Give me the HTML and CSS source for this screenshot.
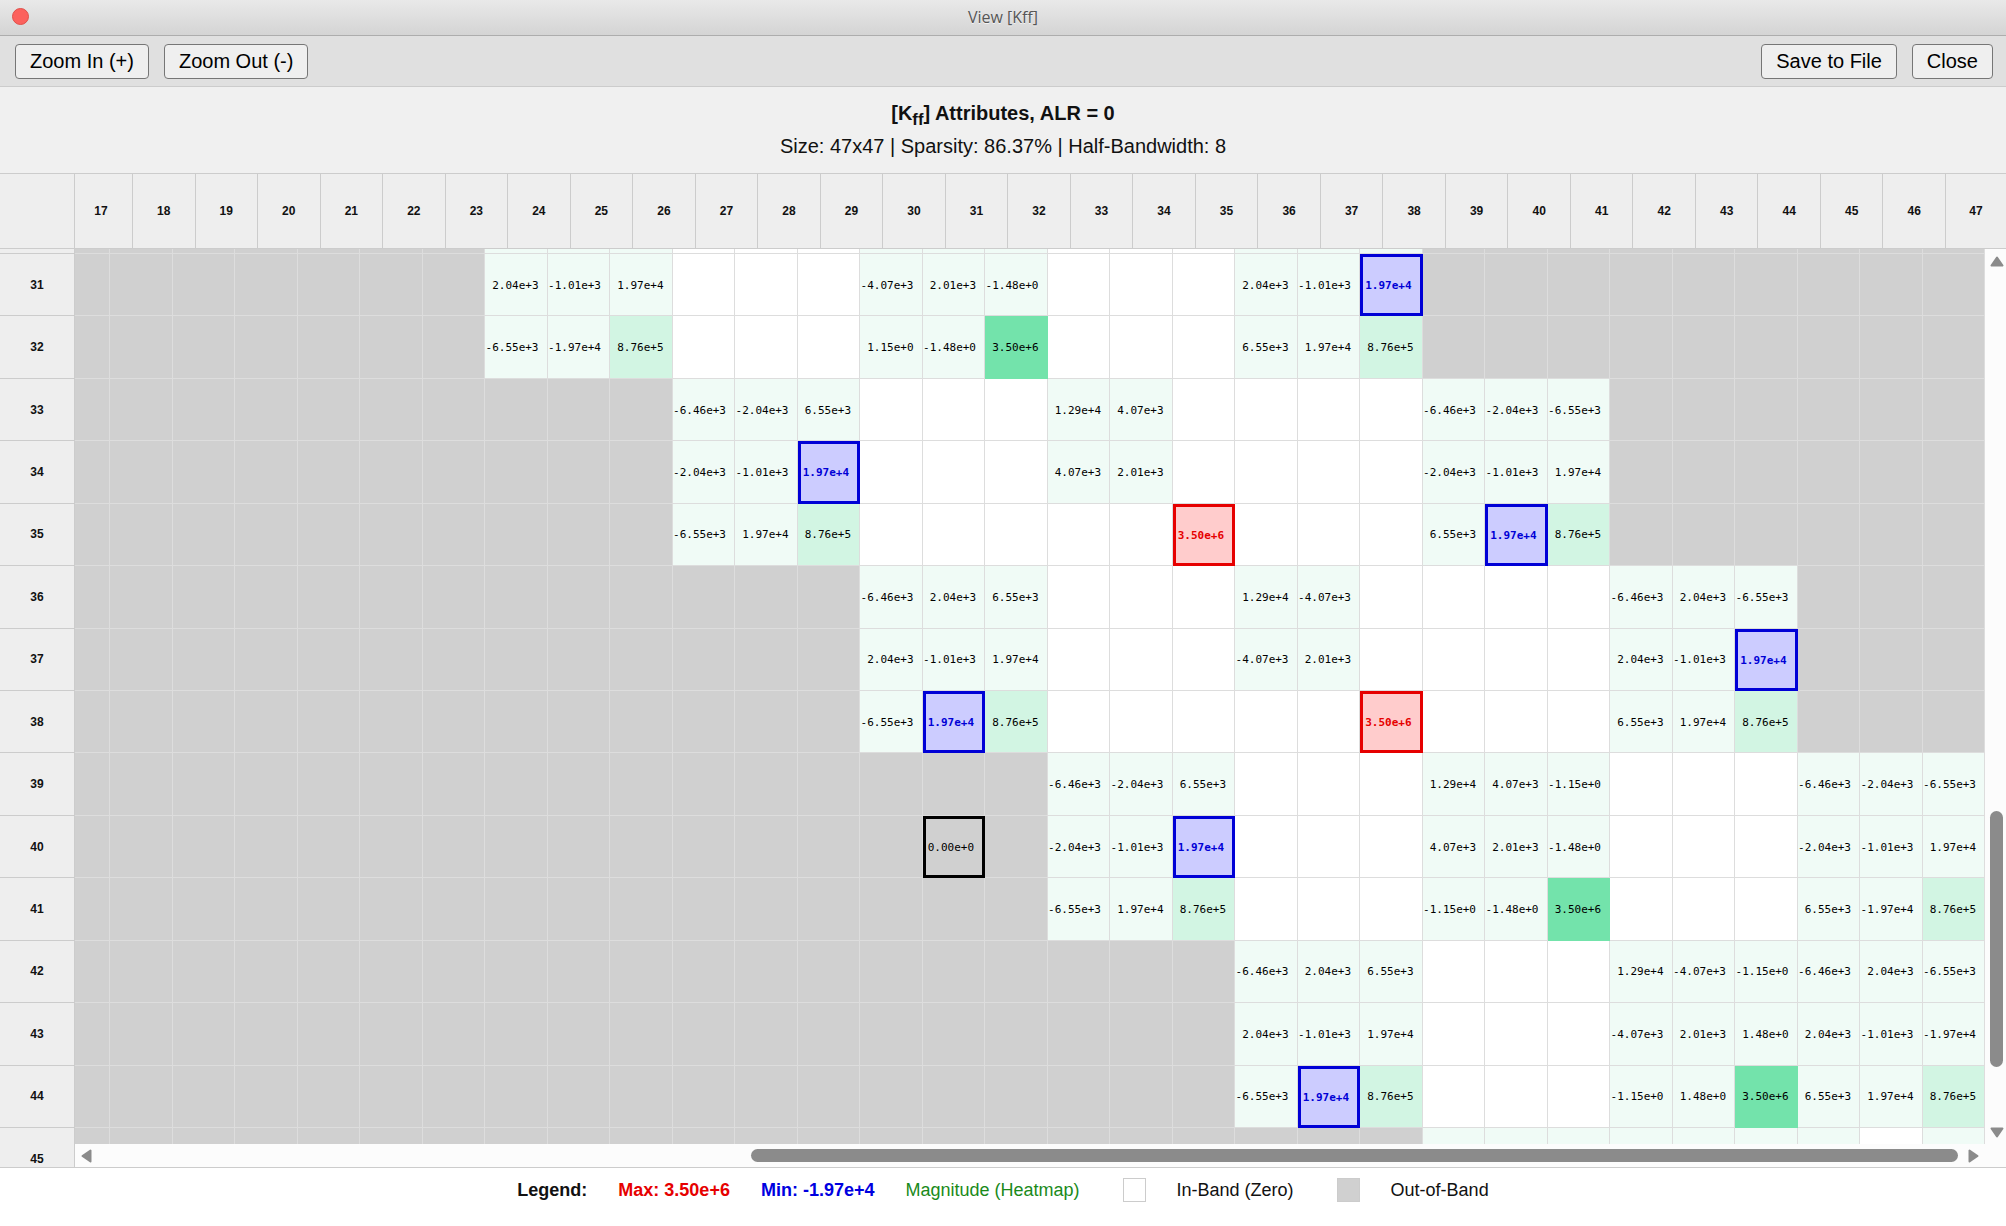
FILE: index.html
```html
<!DOCTYPE html>
<html lang="en">
<head>
<meta charset="utf-8">
<title>View [Kff]</title>
<link rel="stylesheet" href="styles.css">
</head>
<body>
    <div class="titlebar">
        <button class="close-dot" aria-label="Close window"></button>
        <span>View [Kff]</span>
    </div>
    <div class="toolbar">
        <button class="btn">Zoom In (+)</button>
        <button class="btn">Zoom Out (-)</button>
        <span class="spacer"></span>
        <button class="btn">Save to File</button>
        <button class="btn">Close</button>
    </div>
    <div class="info">
        <strong>[K<sub>ff</sub>] Attributes, ALR = 0</strong>
        <div>Size: 47x47 | Sparsity: 86.37% | Half-Bandwidth: 8</div>
    </div>
    <div class="viewer">
        <table class="matrix">
            <thead><tr id="col-heads"><th></th></tr></thead>
            <tbody id="rows"></tbody>
        </table>
        <div class="scrollbar vertical">
            <svg width="14" height="11" viewBox="0 0 14 11"><path d="M7 1.5 L12.5 9.5 H1.5 Z"/></svg>
            <div class="track"><div class="thumb"></div></div>
            <svg width="14" height="11" viewBox="0 0 14 11"><path d="M7 9.5 L12.5 1.5 H1.5 Z"/></svg>
        </div>
        <div class="scrollbar horizontal">
            <svg width="11" height="14" viewBox="0 0 11 14"><path d="M1.5 7 L9.5 1.5 V12.5 Z"/></svg>
            <div class="track"><div class="thumb"></div></div>
            <svg width="11" height="14" viewBox="0 0 11 14"><path d="M9.5 7 L1.5 1.5 V12.5 Z"/></svg>
        </div>
    </div>
    <div class="legend">
        <strong>Legend:</strong>
        <strong class="max-text">Max: 3.50e+6</strong>
        <strong class="min-text">Min: -1.97e+4</strong>
        <span class="heat-text">Magnitude (Heatmap)</span>
        <span class="swatch in-band"></span>
        <span>In-Band (Zero)</span>
        <span class="swatch out-band"></span>
        <span>Out-of-Band</span>
    </div>
    <script>
        const FIRST_COL = 17;
        const LAST_COL = 47;

        // row number, first column in band, values ('.' = zero inside the band)
        // 'h' = heat only, 'max' / 'min' = highlighted
        const rows = [
        [30, 24, 'h h h . . . h h h . . . h h h'],
        [31, 24, '2.04e+3 -1.01e+3 1.97e+4 . . . -4.07e+3 2.01e+3 -1.48e+0 . . . 2.04e+3 -1.01e+3 min'],
        [32, 24, '-6.55e+3 -1.97e+4 8.76e+5 . . . 1.15e+0 -1.48e+0 3.50e+6 . . . 6.55e+3 1.97e+4 8.76e+5'],
        [33, 27, '-6.46e+3 -2.04e+3 6.55e+3 . . . 1.29e+4 4.07e+3 . . . . -6.46e+3 -2.04e+3 -6.55e+3'],
        [34, 27, '-2.04e+3 -1.01e+3 min . . . 4.07e+3 2.01e+3 . . . . -2.04e+3 -1.01e+3 1.97e+4'],
        [35, 27, '-6.55e+3 1.97e+4 8.76e+5 . . . . . max . . . 6.55e+3 min 8.76e+5'],
        [36, 30, '-6.46e+3 2.04e+3 6.55e+3 . . . 1.29e+4 -4.07e+3 . . . . -6.46e+3 2.04e+3 -6.55e+3'],
        [37, 30, '2.04e+3 -1.01e+3 1.97e+4 . . . -4.07e+3 2.01e+3 . . . . 2.04e+3 -1.01e+3 min'],
        [38, 30, '-6.55e+3 min 8.76e+5 . . . . . max . . . 6.55e+3 1.97e+4 8.76e+5'],
        [39, 33, '-6.46e+3 -2.04e+3 6.55e+3 . . . 1.29e+4 4.07e+3 -1.15e+0 . . . -6.46e+3 -2.04e+3 -6.55e+3'],
        [40, 33, '-2.04e+3 -1.01e+3 min . . . 4.07e+3 2.01e+3 -1.48e+0 . . . -2.04e+3 -1.01e+3 1.97e+4'],
        [41, 33, '-6.55e+3 1.97e+4 8.76e+5 . . . -1.15e+0 -1.48e+0 3.50e+6 . . . 6.55e+3 -1.97e+4 8.76e+5'],
        [42, 36, '-6.46e+3 2.04e+3 6.55e+3 . . . 1.29e+4 -4.07e+3 -1.15e+0 -6.46e+3 2.04e+3 -6.55e+3'],
        [43, 36, '2.04e+3 -1.01e+3 1.97e+4 . . . -4.07e+3 2.01e+3 1.48e+0 2.04e+3 -1.01e+3 -1.97e+4'],
        [44, 36, '-6.55e+3 min 8.76e+5 . . . -1.15e+0 1.48e+0 3.50e+6 6.55e+3 1.97e+4 8.76e+5'],
        [45, 39, 'h h h h h h h . h'],
        ];
        const selected = { row: 40, col: 31 };

        const colHeads = document.getElementById('col-heads');
        for (let c = FIRST_COL; c <= LAST_COL; c++) {
            const th = document.createElement('th');
            th.textContent = c;
            colHeads.appendChild(th);
        }

        function fillCell(td, value) {
            if (value === undefined) {
                td.className = 'out';
            } else if (value === 'max' || value === 'min') {
                td.className = value;
                td.textContent = value === 'max' ? '3.50e+6' : '1.97e+4';
            } else if (value !== '.') {
                td.className = 'heat';
                if (value === '8.76e+5') td.className = 'heat mid';
                if (value === '3.50e+6') td.className = 'heat high';
                if (value !== 'h') td.textContent = value;
            }
        }

        const body = document.getElementById('rows');
        for (const [row, start, text] of rows) {
            const values = text.split(' ');
            const tr = document.createElement('tr');
            const th = document.createElement('th');
            if (row > 30) th.textContent = row;
            tr.appendChild(th);
            for (let c = FIRST_COL; c <= LAST_COL; c++) {
                const td = document.createElement('td');
                fillCell(td, values[c - start]);
                if (row === selected.row && c === selected.col) {
                    td.classList.add('selected');
                    td.textContent = '0.00e+0';
                }
                tr.appendChild(td);
            }
            body.appendChild(tr);
        }
    </script>
</body>
</html>
```

FILE: styles.css
```css
* {
    box-sizing: border-box;
}
body {
    margin: 0;
    height: 100vh;
    display: flex;
    flex-direction: column;
    overflow: hidden;
    background: #fff;
    color: #111;
    font-family: Arial, "Liberation Sans", sans-serif;
    font-size: 18px;
}
.titlebar {
    position: relative;
    height: 36px;
    display: flex;
    align-items: center;
    justify-content: center;
    padding-bottom: 1px;
    border-bottom: 1px solid #adadad;
    background: linear-gradient(#e9e9e9, #d4d4d4);
    color: #555;
    font-family: "Open Sans", "Noto Sans", sans-serif;
    font-size: 16px;
    text-shadow: 0 1px 0 #f4f4f4;
}
.close-dot {
    position: absolute;
    left: 12px;
    top: 8px;
    width: 17px;
    height: 17px;
    padding: 0;
    border: 1px solid #e0504a;
    border-radius: 50%;
    background: #fc615d;
}
.toolbar {
    height: 51px;
    display: flex;
    align-items: center;
    gap: 15px;
    padding: 0 13px 0 15px;
    border-bottom: 1px solid #ccc;
    background: #e0e0e0;
}
.spacer {
    flex: 1;
}
.btn {
    height: 35px;
    padding: 0 14px;
    border: 1px solid #767676;
    border-radius: 4px;
    background: #efefef;
    color: #000;
    font-family: inherit;
    font-size: 20px;
}
.info {
    height: 87px;
    padding-top: 10px;
    border-bottom: 1px solid #ccc;
    background: #f0f0f0;
    font-size: 20px;
    line-height: 33px;
    text-align: center;
}
.info strong {
    display: block;
}
.info sub {
    line-height: 0;
}
.viewer {
    position: relative;
    flex: 1;
    min-height: 0;
}

/* matrix */
.matrix {
    height: 100%;
    display: grid;
    grid-template-rows: 75px 5px repeat(14, 1fr) 39px;
    background: #fff;
}
.matrix thead,
.matrix tbody {
    display: contents;
}
.matrix tr {
    display: grid;
    min-height: 0;
    overflow: hidden;
}
.matrix thead tr {
    grid-template-columns: 75px 58px repeat(29, 1fr) 60px;
}
.matrix tbody tr {
    grid-template-columns: 75px 35px repeat(30, 1fr);
    padding-right: 21px;
}
.matrix th,
.matrix td {
    min-width: 0;
    display: flex;
    align-items: center;
    overflow: hidden;
    white-space: nowrap;
}
.matrix th {
    justify-content: center;
    padding: 0;
    border-right: 1px solid #ccc;
    border-bottom: 1px solid #ccc;
    background: #eee;
    font-size: 12px;
}
.matrix thead th:nth-child(2) {
    padding-right: 5px;
}
.matrix thead th:last-child {
    border-right: none;
}
.matrix tbody tr:last-child th {
    min-height: 63px;
}
.matrix td {
    justify-content: flex-end;
    padding: 1px 8px 0 0;
    border-right: 1px solid #ddd;
    border-bottom: 1px solid #ddd;
    color: #000;
    font-family: "DejaVu Sans Mono", monospace;
    font-size: 11px;
}
.matrix .out {
    background: #d0d0d0;
}
.matrix .heat {
    background: #f0fbf6;
}
.matrix .mid {
    background: #d2f5e3;
}
.matrix .high {
    background: #73e3ab;
    border-color: #73e3ab;
}
.matrix .max {
    border: 3px solid #e60000;
    background: #fcc;
    color: #e60000;
    font-weight: bold;
}
.matrix .min {
    border: 3px solid #0000d6;
    background: #ccf;
    color: #0000d6;
    font-weight: bold;
}
.matrix .selected {
    border: 3px solid #000;
}

/* scrollbars lie over the edge of the matrix */
.scrollbar {
    position: absolute;
    display: flex;
    align-items: center;
    background: #fcfcfc;
}
.scrollbar svg {
    flex: none;
    fill: #8b8b8b;
    stroke: #8b8b8b;
    stroke-width: 2;
    stroke-linejoin: round;
}
.track {
    flex: 1;
    display: flex;
}
.thumb {
    border-radius: 7px;
    background: #8b8b8b;
}
.vertical {
    top: 75px;
    right: 0;
    bottom: 23px;
    width: 21px;
    flex-direction: column;
    padding: 7px 1px 6px 3px;
}
.vertical .track {
    flex-direction: column;
    justify-content: flex-end;
    padding-bottom: 60px;
}
.vertical .thumb {
    width: 13px;
    height: 32%;
}
.horizontal {
    left: 75px;
    right: 0;
    bottom: 0;
    height: 23px;
    padding: 0 27px 0 6px;
}
.horizontal .track {
    justify-content: flex-end;
    padding-right: 10px;
}
.horizontal .thumb {
    width: 64.7%;
    height: 13px;
}

.legend {
    height: 59px;
    display: flex;
    justify-content: center;
    gap: 31px;
    padding-top: 10px;
    border-top: 1px solid #ccc;
    line-height: 24px;
}
.max-text {
    color: #e60000;
}
.min-text {
    color: #0000e0;
}
.heat-text {
    color: #1a8a1a;
}
.swatch {
    width: 23px;
    height: 24px;
    margin-left: 12px;
    border: 1px solid #ccc;
}
.out-band {
    background: #d0d0d0;
}
```
